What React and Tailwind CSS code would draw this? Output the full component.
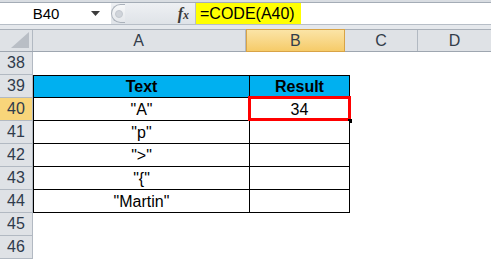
const rows = [
  { n: 38 },
  { n: 39, head: true, a: "Text", b: "Result" },
  { n: 40, a: "\"A\"", b: "34", sel: true },
  { n: 41, a: "\"p\"" },
  { n: 42, a: "\">\"" },
  { n: 43, a: "\"{\"" },
  { n: 44, a: "\"Martin\"", last: true },
  { n: 45 },
  { n: 46 },
];

const FormulaBar = () => (
  <div className="flex h-[22px] border-b border-[#b7bec7]">
    <div className="w-[111px] bg-white flex items-center">
      <span className="w-[92px] text-center text-black text-[15px]">B40</span>
      <svg width="9" height="5" viewBox="0 0 9 5" className="ml-[-1px]">
        <path d="M0 0 L9 0 L4.5 5 Z" fill="#3c3c3c" />
      </svg>
    </div>
    <div className="w-[85px] bg-gradient-to-b from-[#eef0f3] to-[#dfe3e8] flex items-center border-r border-[#b7bec7]">
      <div className="h-[19px] w-[14px] rounded-l-full border border-r-0 border-[#aab1ba] bg-gradient-to-b from-[#f7f8f9] to-[#e4e7eb] flex items-center pl-[3px]">
        <div className="h-[8px] w-[8px] rounded-full bg-[#d0d4da] border border-[#c3c8cf]" />
      </div>
      <span className="ml-auto mr-[6px] font-['Liberation_Serif',serif] italic font-bold text-[16px] text-[#3a3a3a]">
        f<span className="text-[12px]">x</span>
      </span>
    </div>
    <div className="flex-1 bg-white flex items-stretch">
      <span className="bg-[#ffff00] pl-[4px] pr-[6px] flex items-center text-black text-[16px]">=CODE(A40)</span>
    </div>
  </div>
);

const HeaderRow = () => (
  <div className="flex h-[23px] bg-[#dfe2e6] border-t border-[#a9b0b9] border-b border-b-[#9ea6b0] text-[#333d4a]">
    <div className="w-[33px] border-r border-[#b2b9c2] flex items-end justify-end pr-[3px] pb-[3px]">
      <svg width="18" height="16" viewBox="0 0 18 16">
        <path d="M18 0 L18 16 L0 16 Z" fill="#b9bec5" />
      </svg>
    </div>
    <div className="w-[216px] border-r border-[#b2b9c2] flex items-center justify-center">A</div>
    <div className="w-[101px] bg-gradient-to-b from-[#fbe4a6] to-[#f6cb68] border border-[#d8a346] mt-[-1px] mb-[-1px] flex items-center justify-center">
      B
    </div>
    <div className="w-[74px] border-r border-[#b2b9c2] flex items-center justify-center">C</div>
    <div className="w-[74px] flex items-center justify-center">D</div>
  </div>
);

const Row = ({ r }) => {
  const inTable = r.a !== undefined;
  const fill = r.head ? "bg-[#00b0f0] font-bold" : "bg-white";
  const top = r.head ? "border-t" : "";
  return (
    <div className="flex h-[23px]">
      <div
        className={`w-[33px] shrink-0 flex items-center justify-center border-r border-b border-[#b2b9c2] ${
          r.sel ? "bg-[#f8d57a]" : "bg-[#dfe2e6]"
        } text-[#2f3b4c]`}
      >
        {r.n}
      </div>
      {inTable ? (
        <>
          <div
            className={`w-[216px] shrink-0 flex items-center justify-center pt-[1px] border-l border-b border-black ${top} ${fill}`}
          >
            {r.a}
          </div>
          <div
            className={`relative w-[101px] shrink-0 flex items-center justify-center pt-[1px] border-l border-r border-b border-black ${top} ${fill}`}
          >
            {r.b}
            {r.sel && (
              <>
                <div className="absolute left-[-2px] top-[-2px] w-[103px] h-[25px] border-[3px] border-[#ff0000]" />
                <div className="absolute right-[-3px] bottom-[-3px] w-[4px] h-[4px] bg-black" />
              </>
            )}
          </div>
        </>
      ) : (
        <div className="flex-1 bg-white" />
      )}
    </div>
  );
};

export default function App() {
  return (
    <div className="w-[491px] h-[260px] overflow-hidden bg-white font-['Liberation_Sans',sans-serif] text-[16px] leading-none">
      <div className="h-[3px] bg-[#d9dde2] border-b border-[#a4acb6]" />
      <FormulaBar />
      <div className="h-[4px] bg-[#e5e8ec]" />
      <HeaderRow />
      {rows.map((r) => (
        <Row key={r.n} r={r} />
      ))}
    </div>
  );
}
